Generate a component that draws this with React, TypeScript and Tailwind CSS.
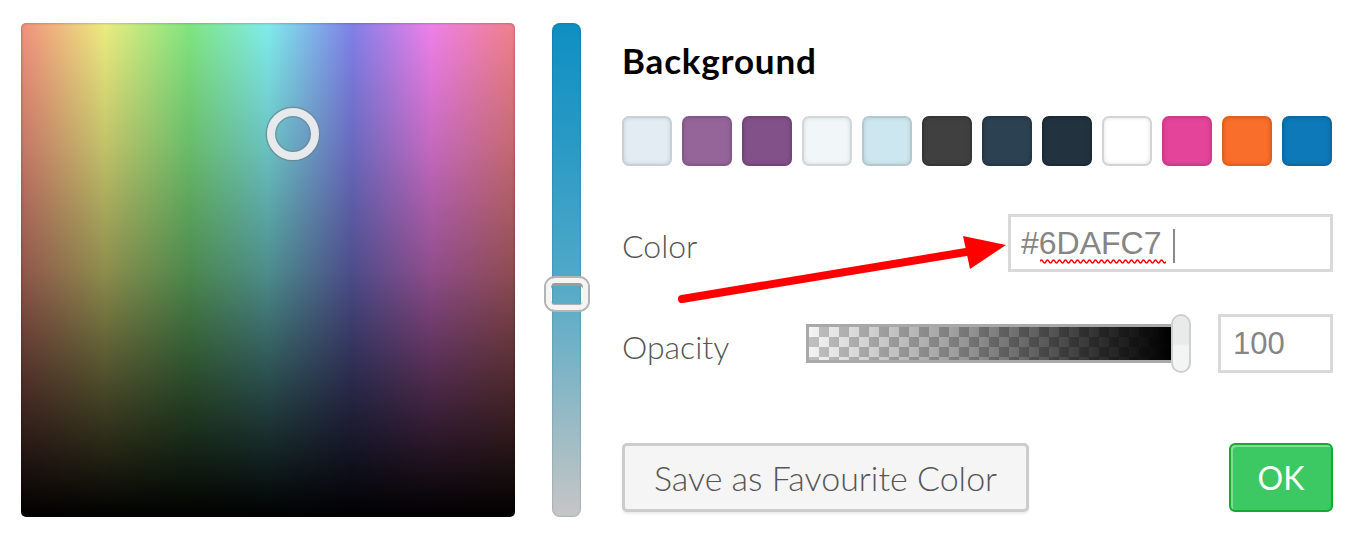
import { ChangeEvent, useState } from "react"

const swatches = [
  "bg-[#e2ecf2] border-[#c9cfd2]",
  "bg-[#95659a] border-[#86578b]",
  "bg-[#83518a] border-[#74447b]",
  "bg-[#f1f6f8] border-[#d2d6d8]",
  "bg-[#cde7f0] border-[#b4c8d0]",
  "bg-[#404040] border-[#353535]",
  "bg-[#2c4152] border-[#243746]",
  "bg-[#22333f] border-[#1b2a34]",
  "bg-[#ffffff] border-[#d4d4d4]",
  "bg-[#e4449a] border-[#cf3a8a]",
  "bg-[#f96e2a] border-[#e2601f]",
  "bg-[#0d79b8] border-[#0b6aa3]",
]

// spell-check wave under the hex value
function Squiggle() {
  let d = "M0 3.5"
  for (let i = 0; i < 42; i++) {
    d += ` q1.5 ${i % 2 === 0 ? -3 : 3} 3 0`
  }
  return (
    <svg className="absolute left-[29px] top-[41px]" width="126" height="7" viewBox="0 0 126 7">
      <path d={d} fill="none" stroke="#ff0000" strokeWidth="1.6" />
    </svg>
  )
}

export default function App() {
  const [hex, setHex] = useState("#6DAFC7")
  const [opacity, setOpacity] = useState("100")

  return (
    <div className="relative w-[1353px] h-[540px] bg-white flex pl-[21px] pt-[23px] font-['Lato',sans-serif] text-[#555]">
      {/* saturation / hue plane */}
      <div className="relative w-[494px] h-[494px] rounded-[5px] shadow-[inset_0_0_3px_rgba(0,0,0,0.35)] bg-[linear-gradient(to_bottom,rgba(0,0,0,0)_0%,rgba(0,0,0,0.18)_25%,rgba(0,0,0,0.4)_50%,rgba(0,0,0,0.74)_78%,#000_100%),linear-gradient(to_right,#f2907e_0%,#ecec80_17%,#80e580_34%,#80ecec_50%,#8080e8_67%,#ef80e9_83%,#f08088_100%)]">
        <div className="absolute left-[246px] top-[85px] w-[52px] h-[52px] rounded-full border-[8px] border-[#e6eaec] shadow-[0_0_0_1.5px_rgba(110,130,140,0.7),inset_0_0_0_1.5px_rgba(110,130,140,0.6)]" />
      </div>

      {/* vertical slider */}
      <div className="relative ml-[37px] w-[29px] h-[494px] rounded-[8px] shadow-[inset_0_0_2px_rgba(0,0,0,0.3)] bg-[linear-gradient(to_bottom,#0e8fc2_0%,#2a9ac5_25%,#4ea8c8_50%,#78b3c6_68%,#a0bcc5_84%,#c6c6c6_100%)]">
        <div className="absolute left-[-6px] top-[255px] w-[42px] h-[32px] rounded-[9px] border-[5px] border-[#f4f4f4] shadow-[0_0_0_2px_#b4b4b4,inset_0_3px_0_#9c9c9c,inset_0_-1px_0_#b0b0b0]" />
      </div>

      {/* right panel */}
      <div className="ml-[41px] w-[711px] flex flex-col">
        <h1 className="mt-[20px] text-[35px] leading-none font-bold tracking-[0.8px] text-black">Background</h1>

        <div className="mt-[38px] flex gap-[10px]">
          {swatches.map((c, i) => (
            <div
              key={i}
              className={`w-[50px] h-[50px] rounded-[7px] border-2 shadow-[inset_0_0_4px_rgba(0,0,0,0.12)] ${c}`}
            />
          ))}
        </div>

        <div className="mt-[48px] flex items-center h-[58px]">
          <span className="text-[32px] leading-none font-light mt-[6px]">Color</span>
          <div className="relative ml-auto w-[325px] h-[58px] border-[3px] border-[#d9d9d9] bg-white">
            <input
              value={hex}
              onChange={(e: ChangeEvent<HTMLInputElement>) => setHex(e.target.value)}
              spellCheck={false}
              className="w-full h-full pl-[10px] pt-[1px] outline-none bg-transparent text-[32px] text-[#858585] font-['Liberation_Sans',Arial,sans-serif]"
            />
            <Squiggle />
            <div className="absolute left-[162px] top-[12px] w-[2px] h-[34px] bg-[#8a8a8a]" />
          </div>
        </div>

        <div className="mt-[42px] flex items-center h-[59px]">
          <span className="w-[184px] text-[32px] leading-none font-light mt-[6px]">Opacity</span>
          <div className="relative w-[385px] h-[59px] flex items-center">
            <div className="w-[368px] h-[39px] border-[3px] border-[#a9a9a9] bg-[linear-gradient(to_right,rgba(0,0,0,0)_0%,rgba(0,0,0,0.35)_40%,rgba(0,0,0,0.8)_80%,#000_100%),repeating-conic-gradient(#c0c0c0_0%_25%,#f4f4f4_0%_50%)] bg-[length:100%_100%,20px_20px]" />
            <div className="absolute left-[365px] top-0 w-[20px] h-[59px] rounded-full border-2 border-[#cdd0d0] bg-[linear-gradient(to_bottom,#e9ebeb_0%,#e9ebeb_50%,#f3f4f4_55%,#f3f4f4_100%)]" />
          </div>
          <input
            value={opacity}
            onChange={(e: ChangeEvent<HTMLInputElement>) => setOpacity(e.target.value)}
            className="ml-auto w-[115px] h-[59px] border-[3px] border-[#d9d9d9] pl-[12px] outline-none text-[31px] text-[#858585] font-['Liberation_Sans',Arial,sans-serif]"
          />
        </div>

        <div className="mt-[70px] flex items-center justify-between">
          <button className="w-[407px] h-[69px] rounded-[5px] border-[3px] border-[#cccccc] bg-[#f5f5f5] shadow-[0_2px_2px_rgba(0,0,0,0.08)] text-[34px] font-light text-[#555] leading-none">
            Save as Favourite Color
          </button>
          <button className="w-[104px] h-[69px] rounded-[6px] border-2 border-[#15a835] bg-[#3cc862] shadow-[inset_2px_2px_0_rgba(255,255,255,0.35)] text-[32px] text-white leading-none">
            OK
          </button>
        </div>
      </div>

      {/* annotation arrow */}
      <svg className="absolute inset-0 pointer-events-none" width="1353" height="540" viewBox="0 0 1353 540">
        <line x1="682" y1="299" x2="972" y2="251" stroke="#ff0000" strokeWidth="8" strokeLinecap="round" />
        <polygon points="1006,245 963,236 970,269" fill="#ff0000" />
      </svg>
    </div>
  )
}
